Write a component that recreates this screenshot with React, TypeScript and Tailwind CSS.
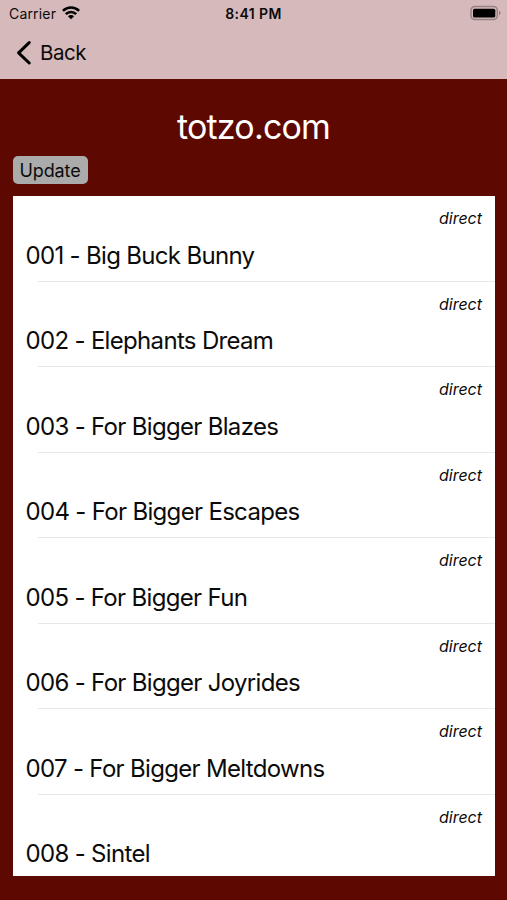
const videos = [
  "001 - Big Buck Bunny",
  "002 - Elephants Dream",
  "003 - For Bigger Blazes",
  "004 - For Bigger Escapes",
  "005 - For Bigger Fun",
  "006 - For Bigger Joyrides",
  "007 - For Bigger Meltdowns",
  "008 - Sintel",
]

function WifiIcon() {
  return (
    <svg viewBox="0 0 18 14" className="-mt-px ml-[6px] h-[14px] w-[18px]">
      <g fill="none" stroke="black" strokeWidth="2.6">
        <path d="M0.9 4.9C5.5 0.4 12.5 0.4 17.1 4.9" />
        <path d="M3.8 8.1C6.7 5.2 11.3 5.2 14.2 8.1" />
      </g>
      <path d="M9 13.3L5.9 10.2C7.7 8.6 10.3 8.6 12.1 10.2Z" />
    </svg>
  )
}

function BatteryIcon() {
  return (
    <svg viewBox="0 0 32 16" className="-mt-px h-4 w-8">
      <rect
        x="1"
        y="1.5"
        width="26.3"
        height="13"
        rx="3.8"
        fill="none"
        stroke="#978384"
        strokeWidth="1.5"
      />
      <rect x="3" y="3.7" width="22.3" height="8.8" rx="1.6" />
      <path d="M29 5.8C31.2 6.7 31.2 9.3 29 10.2Z" fill="#978384" />
    </svg>
  )
}

function StatusBar() {
  return (
    <div className="grid h-[27px] grid-cols-[1fr_auto_1fr] items-center px-[5px]">
      <div className="flex items-center pl-[4px]">
        <span className="text-[14px] tracking-[0.17px]">Carrier</span>
        <WifiIcon />
      </div>
      <span className="pb-px font-semibold text-[14px] tracking-[0.42px]">
        8:41 PM
      </span>
      <div className="flex justify-end">
        <BatteryIcon />
      </div>
    </div>
  )
}

function Header() {
  return (
    <header className="h-[79px] bg-[#d6babb]">
      <StatusBar />
      <button type="button" className="flex h-[51px] items-center pl-[15.5px]">
        <svg viewBox="0 0 16 24" className="h-6 w-4">
          <path
            d="M13.2 1.6L2.6 11.8L13.2 22"
            fill="none"
            stroke="black"
            strokeWidth="3"
            strokeLinecap="round"
            strokeLinejoin="round"
          />
        </svg>
        <span className="ml-[8.5px] pt-px text-[20.5px] tracking-[-0.45px]">
          Back
        </span>
      </button>
    </header>
  )
}

function VideoRow({ title }: { title: string }) {
  return (
    <li className="flex h-[85.5px] shrink-0 flex-col">
      <span className="mt-[12.4px] mr-[12.5px] self-end text-[16px] italic leading-[20px] tracking-[0px]">
        direct
      </span>
      <span className="mt-[12.4px] ml-[12.5px] text-[24px] leading-[30px] tracking-[-0.68px]">
        {title}
      </span>
      <div className="mt-auto ml-[25px] h-px bg-[#e7e7e7]" />
    </li>
  )
}

export default function App() {
  return (
    <div className="flex h-[900px] w-[507px] flex-col overflow-hidden bg-[#5d0801] font-['Inter','Liberation_Sans',sans-serif] text-[#0b0b0b]">
      <Header />
      <main className="flex flex-col px-[13px]">
        <h1 className="mt-[26px] text-center text-[34px] text-white leading-[44px] tracking-[-0.8px]">
          totzo.com
        </h1>
        <button
          type="button"
          className="mt-[7px] h-[28px] w-[75px] rounded-[5px] bg-[#ababac] pt-px pr-px text-[18px] leading-[27px] tracking-[-0.1px]"
        >
          Update
        </button>
        <ul className="mt-[12.1px] flex h-[680px] w-[481.5px] flex-col overflow-hidden bg-white">
          {videos.map((title) => (
            <VideoRow key={title} title={title} />
          ))}
        </ul>
      </main>
    </div>
  )
}
